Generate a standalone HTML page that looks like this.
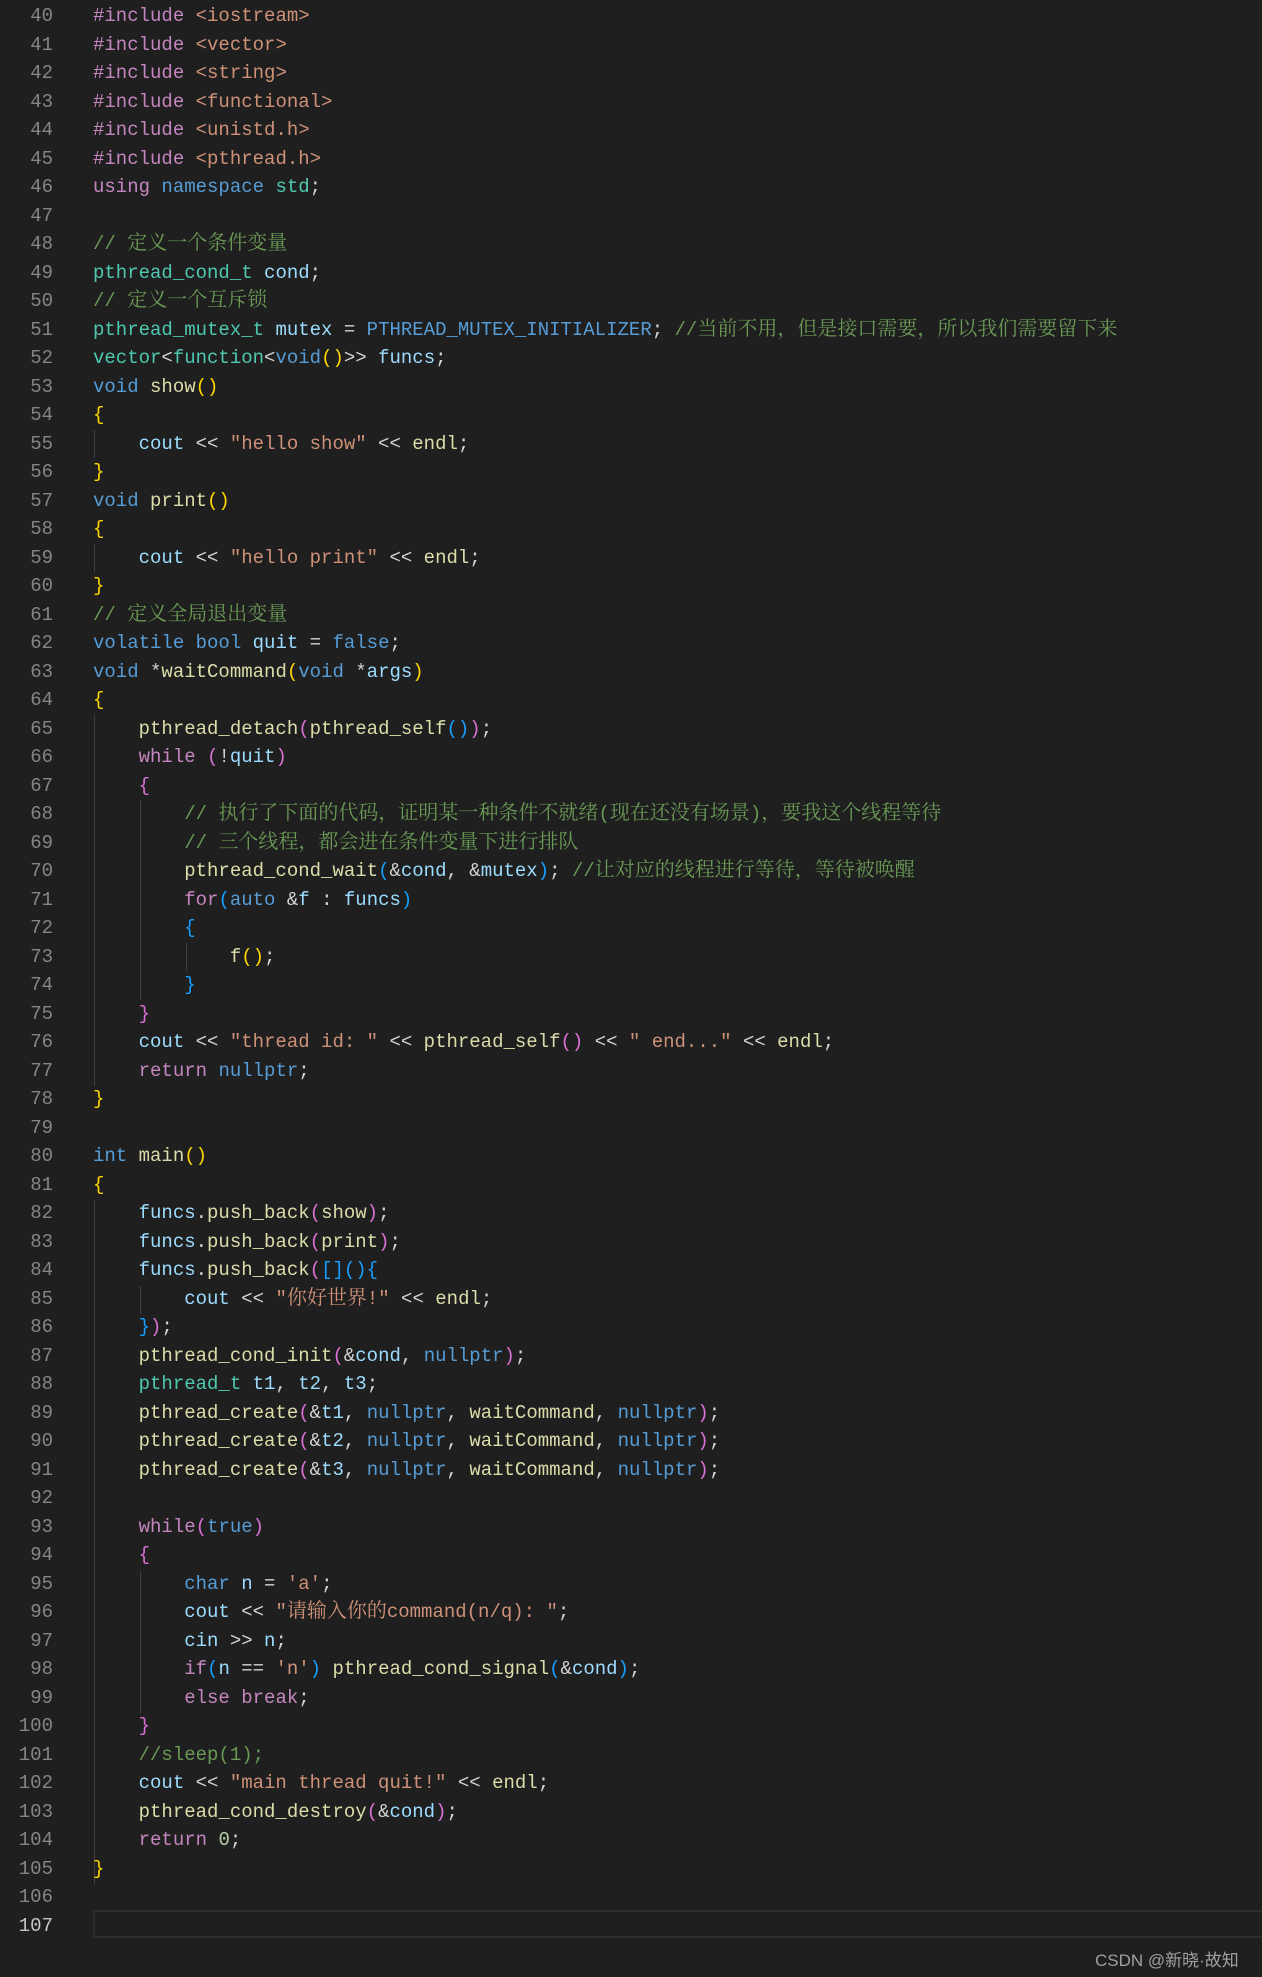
<!DOCTYPE html>
<html><head><meta charset="utf-8"><style>
html,body{margin:0;padding:0;background:#1f1f1f;width:1262px;height:1977px;overflow:hidden;position:relative}
.col{margin:0;font-family:"Liberation Mono","Noto Sans CJK SC",monospace;font-size:19px;position:absolute;top:2.25px}
.col div{height:28.5px;line-height:28.5px;white-space:pre;overflow:visible}
#nums{left:0;width:53px;text-align:right;color:#858585}
#code{left:93px;color:#d4d4d4}
.z{font-family:"Noto Serif CJK SC","Noto Sans CJK SC",serif;font-size:20px;line-height:0}
.k{color:#c586c0}.b{color:#569cd6}.t{color:#4ec9b0}.v{color:#9cdcfe}.f{color:#dcdcaa}.s{color:#ce9178}.c{color:#6a9955}.n{color:#b5cea8}
.y{color:#ffd700}.p{color:#da70d6}.l{color:#179fff}
.g{position:absolute;width:1px;background:#404040}
#act{position:absolute;left:93px;right:0;top:1910px;height:24px;border:2px solid #2c2c2c;border-right:none}
#wm{position:absolute;left:1095px;top:1946px;font-family:"Liberation Sans","Noto Sans CJK SC",sans-serif;font-size:17px;color:#a0a0a0}
</style></head><body>
<div id="act"></div>
<div class="g" style="left:94px;top:430px;height:28px"></div>
<div class="g" style="left:94px;top:544px;height:28px"></div>
<div class="g" style="left:94px;top:715px;height:371px"></div>
<div class="g" style="left:140px;top:800px;height:200px"></div>
<div class="g" style="left:186px;top:943px;height:28px"></div>
<div class="g" style="left:94px;top:1200px;height:684px"></div>
<div class="g" style="left:140px;top:1286px;height:28px"></div>
<div class="g" style="left:140px;top:1571px;height:143px"></div>
<div class="col" id="nums"><div>40</div><div>41</div><div>42</div><div>43</div><div>44</div><div>45</div><div>46</div><div>47</div><div>48</div><div>49</div><div>50</div><div>51</div><div>52</div><div>53</div><div>54</div><div>55</div><div>56</div><div>57</div><div>58</div><div>59</div><div>60</div><div>61</div><div>62</div><div>63</div><div>64</div><div>65</div><div>66</div><div>67</div><div>68</div><div>69</div><div>70</div><div>71</div><div>72</div><div>73</div><div>74</div><div>75</div><div>76</div><div>77</div><div>78</div><div>79</div><div>80</div><div>81</div><div>82</div><div>83</div><div>84</div><div>85</div><div>86</div><div>87</div><div>88</div><div>89</div><div>90</div><div>91</div><div>92</div><div>93</div><div>94</div><div>95</div><div>96</div><div>97</div><div>98</div><div>99</div><div>100</div><div>101</div><div>102</div><div>103</div><div>104</div><div>105</div><div>106</div><div style="color:#c6c6c6">107</div></div>
<div class="col" id="code">
<div><span class="k">#include</span> <span class="s">&lt;iostream&gt;</span></div>
<div><span class="k">#include</span> <span class="s">&lt;vector&gt;</span></div>
<div><span class="k">#include</span> <span class="s">&lt;string&gt;</span></div>
<div><span class="k">#include</span> <span class="s">&lt;functional&gt;</span></div>
<div><span class="k">#include</span> <span class="s">&lt;unistd.h&gt;</span></div>
<div><span class="k">#include</span> <span class="s">&lt;pthread.h&gt;</span></div>
<div><span class="k">using</span> <span class="b">namespace</span> <span class="t">std</span>;</div>
<div></div>
<div><span class="c">// <span class="z">定义一个条件变量</span></span></div>
<div><span class="t">pthread_cond_t</span> <span class="v">cond</span>;</div>
<div><span class="c">// <span class="z">定义一个互斥锁</span></span></div>
<div><span class="t">pthread_mutex_t</span> <span class="v">mutex</span> = <span class="b">PTHREAD_MUTEX_INITIALIZER</span>; <span class="c">//<span class="z">当前不用，但是接口需要，所以我们需要留下来</span></span></div>
<div><span class="t">vector</span>&lt;<span class="t">function</span>&lt;<span class="b">void</span><span class="y">()</span>&gt;&gt; <span class="v">funcs</span>;</div>
<div><span class="b">void</span> <span class="f">show</span><span class="y">()</span></div>
<div><span class="y">{</span></div>
<div>    <span class="v">cout</span> &lt;&lt; <span class="s">"hello show"</span> &lt;&lt; <span class="f">endl</span>;</div>
<div><span class="y">}</span></div>
<div><span class="b">void</span> <span class="f">print</span><span class="y">()</span></div>
<div><span class="y">{</span></div>
<div>    <span class="v">cout</span> &lt;&lt; <span class="s">"hello print"</span> &lt;&lt; <span class="f">endl</span>;</div>
<div><span class="y">}</span></div>
<div><span class="c">// <span class="z">定义全局退出变量</span></span></div>
<div><span class="b">volatile</span> <span class="b">bool</span> <span class="v">quit</span> = <span class="b">false</span>;</div>
<div><span class="b">void</span> *<span class="f">waitCommand</span><span class="y">(</span><span class="b">void</span> *<span class="v">args</span><span class="y">)</span></div>
<div><span class="y">{</span></div>
<div>    <span class="f">pthread_detach</span><span class="p">(</span><span class="f">pthread_self</span><span class="l">()</span><span class="p">)</span>;</div>
<div>    <span class="k">while</span> <span class="p">(</span>!<span class="v">quit</span><span class="p">)</span></div>
<div>    <span class="p">{</span></div>
<div>        <span class="c">// <span class="z">执行了下面的代码，证明某一种条件不就绪</span>(<span class="z">现在还没有场景</span>)<span class="z">，要我这个线程等待</span></span></div>
<div>        <span class="c">// <span class="z">三个线程，都会进在条件变量下进行排队</span></span></div>
<div>        <span class="f">pthread_cond_wait</span><span class="l">(</span>&amp;<span class="v">cond</span>, &amp;<span class="v">mutex</span><span class="l">)</span>; <span class="c">//<span class="z">让对应的线程进行等待，等待被唤醒</span></span></div>
<div>        <span class="k">for</span><span class="l">(</span><span class="b">auto</span> &amp;<span class="v">f</span> : <span class="v">funcs</span><span class="l">)</span></div>
<div>        <span class="l">{</span></div>
<div>            <span class="f">f</span><span class="y">()</span>;</div>
<div>        <span class="l">}</span></div>
<div>    <span class="p">}</span></div>
<div>    <span class="v">cout</span> &lt;&lt; <span class="s">"thread id: "</span> &lt;&lt; <span class="f">pthread_self</span><span class="p">()</span> &lt;&lt; <span class="s">" end..."</span> &lt;&lt; <span class="f">endl</span>;</div>
<div>    <span class="k">return</span> <span class="b">nullptr</span>;</div>
<div><span class="y">}</span></div>
<div></div>
<div><span class="b">int</span> <span class="f">main</span><span class="y">()</span></div>
<div><span class="y">{</span></div>
<div>    <span class="v">funcs</span>.<span class="f">push_back</span><span class="p">(</span><span class="f">show</span><span class="p">)</span>;</div>
<div>    <span class="v">funcs</span>.<span class="f">push_back</span><span class="p">(</span><span class="f">print</span><span class="p">)</span>;</div>
<div>    <span class="v">funcs</span>.<span class="f">push_back</span><span class="p">(</span><span class="l">[]()</span><span class="l">{</span></div>
<div>        <span class="v">cout</span> &lt;&lt; <span class="s">"<span class="z">你好世界</span>!"</span> &lt;&lt; <span class="f">endl</span>;</div>
<div>    <span class="l">}</span><span class="p">)</span>;</div>
<div>    <span class="f">pthread_cond_init</span><span class="p">(</span>&amp;<span class="v">cond</span>, <span class="b">nullptr</span><span class="p">)</span>;</div>
<div>    <span class="t">pthread_t</span> <span class="v">t1</span>, <span class="v">t2</span>, <span class="v">t3</span>;</div>
<div>    <span class="f">pthread_create</span><span class="p">(</span>&amp;<span class="v">t1</span>, <span class="b">nullptr</span>, <span class="f">waitCommand</span>, <span class="b">nullptr</span><span class="p">)</span>;</div>
<div>    <span class="f">pthread_create</span><span class="p">(</span>&amp;<span class="v">t2</span>, <span class="b">nullptr</span>, <span class="f">waitCommand</span>, <span class="b">nullptr</span><span class="p">)</span>;</div>
<div>    <span class="f">pthread_create</span><span class="p">(</span>&amp;<span class="v">t3</span>, <span class="b">nullptr</span>, <span class="f">waitCommand</span>, <span class="b">nullptr</span><span class="p">)</span>;</div>
<div></div>
<div>    <span class="k">while</span><span class="p">(</span><span class="b">true</span><span class="p">)</span></div>
<div>    <span class="p">{</span></div>
<div>        <span class="b">char</span> <span class="v">n</span> = <span class="s">'a'</span>;</div>
<div>        <span class="v">cout</span> &lt;&lt; <span class="s">"<span class="z">请输入你的</span>command(n/q): "</span>;</div>
<div>        <span class="v">cin</span> &gt;&gt; <span class="v">n</span>;</div>
<div>        <span class="k">if</span><span class="l">(</span><span class="v">n</span> == <span class="s">'n'</span><span class="l">)</span> <span class="f">pthread_cond_signal</span><span class="l">(</span>&amp;<span class="v">cond</span><span class="l">)</span>;</div>
<div>        <span class="k">else</span> <span class="k">break</span>;</div>
<div>    <span class="p">}</span></div>
<div>    <span class="c">//sleep(1);</span></div>
<div>    <span class="v">cout</span> &lt;&lt; <span class="s">"main thread quit!"</span> &lt;&lt; <span class="f">endl</span>;</div>
<div>    <span class="f">pthread_cond_destroy</span><span class="p">(</span>&amp;<span class="v">cond</span><span class="p">)</span>;</div>
<div>    <span class="k">return</span> <span class="n">0</span>;</div>
<div><span class="y">}</span></div>
<div></div>
<div></div>
</div>
<div id="wm">CSDN @新晓·故知</div>
</body></html>
